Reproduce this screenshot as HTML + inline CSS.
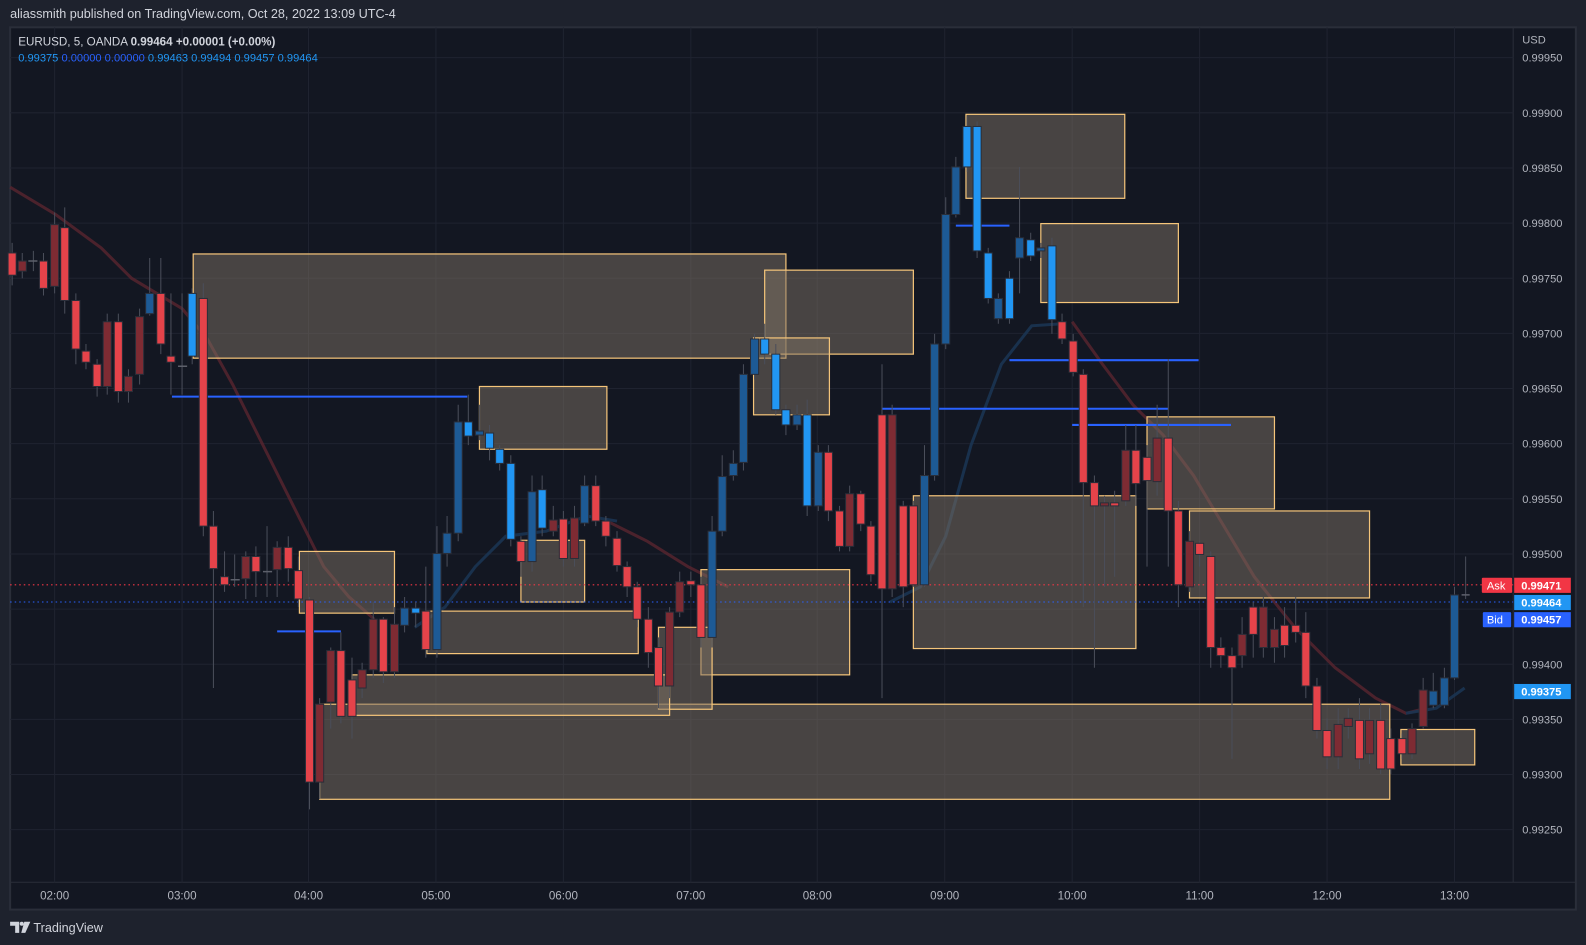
<!DOCTYPE html>
<html><head><meta charset="utf-8"><style>
html,body{margin:0;padding:0;background:#1e222d;overflow:hidden}
svg{display:block}
text{font-family:"Liberation Sans",sans-serif}
</style></head><body>
<svg width="1586" height="945" viewBox="0 0 1568 934" preserveAspectRatio="none" xmlns="http://www.w3.org/2000/svg">
<rect width="1568" height="934" fill="#1e222d"/>
<text x="10" y="18" fill="#d1d4dc" font-size="12.5">aliassmith published on TradingView.com, Oct 28, 2022 13:09 UTC-4</text>
<rect x="10" y="27" width="1548" height="872" fill="#131722" stroke="#2a2e39" stroke-width="2"/>
<line x1="10" y1="872" x2="1558" y2="872" stroke="#2a2e39"/>
<line x1="1496" y1="27" x2="1496" y2="872" stroke="#2a2e39"/>
<g stroke="#1f2330" stroke-width="1">
<path d="M54 27V872M180 27V872M305 27V872M431 27V872M557 27V872M683 27V872M808 27V872M934 27V872M1060 27V872M1186 27V872M1312 27V872M1438 27V872"/>
<path d="M10 57H1496M10 111.5H1496M10 166H1496M10 220.5H1496M10 275H1496M10 329.5H1496M10 384H1496M10 438.5H1496M10 493H1496M10 547.5H1496M10 602H1496M10 656.5H1496M10 711H1496M10 765.5H1496M10 820H1496"/>
</g>
<!-- moving averages -->
<path d="M10 185L55 212L100 245L130 275L180 305L205 335L230 380L260 440L290 500L320 560L345 590L370 612" fill="none" stroke="#5a2630" stroke-width="3" opacity=".8"/>
<path d="M600 515L640 535L680 560L720 580" fill="none" stroke="#5a2630" stroke-width="3" opacity=".8"/>
<path d="M1060 318L1090 360L1120 400L1150 430L1180 470L1210 520L1240 570L1280 620L1320 660L1360 690L1390 705L1410 700" fill="none" stroke="#5a2630" stroke-width="3" opacity=".8"/>
<path d="M410 620L440 600L470 560L500 530L540 525L580 510L610 515M880 595L910 580L935 530L960 440L990 360L1020 322L1050 320M1390 705L1420 700L1448 680" fill="none" stroke="#1b3452" stroke-width="3" opacity=".9"/>
<!-- boxes -->
<g fill="#7d7264" fill-opacity=".5" stroke="#f5c57a" stroke-width="1.2">
<rect x="316" y="696" width="1058" height="94"/>
<rect x="191" y="251" width="586" height="103"/>
<rect x="756" y="267" width="147" height="83"/>
<rect x="745" y="334" width="75" height="76"/>
<rect x="474" y="382" width="126" height="62"/>
<rect x="955" y="113" width="157" height="83"/>
<rect x="1029" y="221" width="136" height="78"/>
<rect x="1134" y="412" width="126" height="91"/>
<rect x="903" y="490" width="220" height="151"/>
<rect x="1176" y="505" width="178" height="86"/>
<rect x="296" y="545" width="94" height="61"/>
<rect x="515" y="534" width="63" height="61"/>
<rect x="693" y="563" width="147" height="104"/>
<rect x="422" y="604" width="209" height="42"/>
<rect x="651" y="620" width="53" height="81"/>
<rect x="348" y="667" width="314" height="40"/>
<rect x="1385" y="721" width="73" height="35"/>
</g>
<!-- blue levels -->
<g stroke="#2962ff" stroke-width="2">
<path d="M170 392H462M274 624H337M872 404H1155M998 356H1185M1060 420H1217M945 223H998"/>
</g>
<!-- ask/bid lines -->
<line x1="10" y1="578" x2="1496" y2="578" stroke="#f23645" stroke-dasharray="1.5 3" stroke-width="1"/>
<line x1="10" y1="595" x2="1496" y2="595" stroke="#2962ff" stroke-dasharray="1.5 3" stroke-width="1"/>
<!-- wicks -->
<path stroke="#4a4e5a" stroke-width="1" fill="none" d="M12 240V282M22 250V275M33 248V268M43 250V292M54 210V290M64 205V310M75 290V360M85 340V365M96 355V392M106 310V390M117 310V398M127 365V398M138 305V380M148 255V312M159 255V350M169 290V390M180 290V390M190 285V360M201 280V530M211 505V680M222 545V585M232 548V580M243 545V592M253 540V590M264 520V590M274 535V590M285 530V575M295 550V600M306 590V800M316 690V790M327 640V720M337 625V715M348 650V730M358 655V690M369 595V670M379 610V675M390 600V670M400 590V625M411 595V620M421 560V650M432 520V650M442 510V560M453 400V535M463 390V440M474 400V435M484 420V455M494 440V465M505 450V540M515 530V570M526 470V565M536 470V530M547 500V530M557 505V560M568 500V560M578 470V520M589 470V520M599 510V540M610 525V565M620 555V590M630 575V620M641 600V660M651 630V700M662 600V690M672 565V610M683 565V590M693 570V640M704 510V640M714 450V530M725 445V475M735 360V465M746 330V375M756 320V360M767 340V410M777 400V430M788 400V425M798 395V510M809 440V505M819 440V515M830 500V545M840 480V545M851 485V525M861 515V575M872 360V690M882 400V590M893 495V600M903 495V580M914 440V580M924 330V475M935 195V345M945 155V215M956 115V170M966 120V255M977 245V300M987 290V320M998 268V320M1008 165V290M1019 230V258M1029 240V255M1040 235V330M1050 310V340M1061 330V372M1071 365V600M1082 470V660M1092 490V580M1102 485V570M1113 420V500M1123 420V500M1134 440V560M1144 400V490M1155 355V560M1165 495V600M1176 525V585M1186 535V560M1197 545V660M1207 630V660M1218 640V750M1228 610V660M1239 595V650M1249 590V650M1260 610V655M1270 600V650M1281 590V635M1291 605V690M1302 670V730M1312 710V760M1323 700V760M1333 700V730M1344 690V760M1354 700V755M1365 695V765M1375 720V765M1386 725V750M1396 715V750M1407 670V720M1417 665V700M1428 660V700M1438 580V672M1449 550V592"/>
<!-- candles -->
<g stroke="#2a2e39" stroke-width="1">
<g fill="#e5434a">
<rect x="8" y="250" width="8" height="22"/><rect x="39" y="258" width="8" height="27"/><rect x="60" y="225" width="8" height="72"/><rect x="71" y="297" width="8" height="48"/><rect x="81" y="347" width="8" height="11"/><rect x="92" y="360" width="8" height="22"/><rect x="113" y="318" width="8" height="69"/><rect x="155" y="290" width="8" height="50"/><rect x="165" y="352" width="8" height="6"/><rect x="197" y="295" width="8" height="225"/><rect x="207" y="520" width="8" height="42"/><rect x="218" y="570" width="8" height="8"/><rect x="249" y="550" width="8" height="15"/><rect x="281" y="541" width="8" height="21"/><rect x="291" y="564" width="8" height="28"/><rect x="302" y="593" width="8" height="180"/><rect x="333" y="643" width="8" height="65"/><rect x="344" y="672" width="8" height="36"/><rect x="375" y="612" width="8" height="52"/><rect x="417" y="604" width="8" height="38"/><rect x="511" y="535" width="8" height="20"/><rect x="553" y="513" width="8" height="39"/><rect x="585" y="480" width="8" height="35"/><rect x="595" y="515" width="8" height="15"/><rect x="606" y="532" width="8" height="27"/><rect x="616" y="560" width="8" height="20"/><rect x="626" y="580" width="8" height="32"/><rect x="637" y="612" width="8" height="33"/><rect x="647" y="640" width="8" height="38"/><rect x="679" y="574" width="8" height="4"/><rect x="689" y="578" width="8" height="52"/><rect x="815" y="447" width="8" height="58"/><rect x="826" y="505" width="8" height="35"/><rect x="847" y="488" width="8" height="30"/><rect x="857" y="520" width="8" height="48"/><rect x="868" y="410" width="8" height="172"/><rect x="889" y="500" width="8" height="80"/><rect x="899" y="500" width="8" height="78"/><rect x="1046" y="318" width="8" height="17"/><rect x="1057" y="337" width="8" height="31"/><rect x="1067" y="370" width="8" height="107"/><rect x="1078" y="477" width="8" height="23"/><rect x="1098" y="497" width="8" height="3"/><rect x="1119" y="445" width="8" height="33"/><rect x="1130" y="452" width="8" height="23"/><rect x="1151" y="433" width="8" height="72"/><rect x="1161" y="505" width="8" height="73"/><rect x="1182" y="537" width="8" height="11"/><rect x="1193" y="550" width="8" height="90"/><rect x="1203" y="640" width="8" height="8"/><rect x="1214" y="648" width="8" height="12"/><rect x="1235" y="600" width="8" height="27"/><rect x="1266" y="618" width="8" height="20"/><rect x="1277" y="618" width="8" height="7"/><rect x="1287" y="625" width="8" height="53"/><rect x="1298" y="678" width="8" height="44"/><rect x="1308" y="722" width="8" height="26"/><rect x="1340" y="712" width="8" height="38"/><rect x="1361" y="712" width="8" height="48"/><rect x="1371" y="730" width="8" height="30"/><rect x="1382" y="730" width="8" height="15"/>
</g>
<g fill="#7e2b33">
<rect x="18" y="258" width="8" height="10"/><rect x="50" y="222" width="8" height="61"/><rect x="102" y="318" width="8" height="64"/><rect x="123" y="372" width="8" height="15"/><rect x="134" y="313" width="8" height="57"/><rect x="239" y="550" width="8" height="22"/><rect x="270" y="541" width="8" height="22"/><rect x="312" y="696" width="8" height="77"/><rect x="323" y="643" width="8" height="51"/><rect x="354" y="662" width="8" height="18"/><rect x="365" y="612" width="8" height="50"/><rect x="386" y="617" width="8" height="47"/><rect x="543" y="514" width="8" height="11"/><rect x="564" y="512" width="8" height="40"/><rect x="658" y="605" width="8" height="73"/><rect x="668" y="575" width="8" height="30"/><rect x="836" y="488" width="8" height="52"/><rect x="878" y="410" width="8" height="172"/><rect x="1088" y="497" width="8" height="3"/><rect x="1109" y="445" width="8" height="50"/><rect x="1140" y="433" width="8" height="43"/><rect x="1172" y="535" width="8" height="45"/><rect x="1224" y="627" width="8" height="21"/><rect x="1245" y="600" width="8" height="40"/><rect x="1256" y="622" width="8" height="18"/><rect x="1319" y="716" width="8" height="32"/><rect x="1329" y="710" width="8" height="8"/><rect x="1350" y="712" width="8" height="33"/><rect x="1392" y="720" width="8" height="25"/><rect x="1403" y="682" width="8" height="36"/>
</g>
<g fill="#2196f3">
<rect x="186" y="290" width="8" height="62"/><rect x="407" y="601" width="8" height="5"/><rect x="459" y="417" width="8" height="14"/><rect x="480" y="428" width="8" height="15"/><rect x="490" y="444" width="8" height="14"/><rect x="501" y="458" width="8" height="75"/><rect x="532" y="484" width="8" height="38"/><rect x="752" y="335" width="8" height="15"/><rect x="763" y="350" width="8" height="55"/><rect x="773" y="405" width="8" height="15"/><rect x="794" y="410" width="8" height="90"/><rect x="952" y="125" width="8" height="40"/><rect x="962" y="125" width="8" height="123"/><rect x="973" y="250" width="8" height="45"/><rect x="994" y="275" width="8" height="40"/><rect x="1015" y="237" width="8" height="16"/><rect x="1036" y="243" width="8" height="73"/>
</g>
<g fill="#1d5a95">
<rect x="144" y="290" width="8" height="20"/><rect x="396" y="601" width="8" height="17"/><rect x="428" y="547" width="8" height="95"/><rect x="438" y="527" width="8" height="20"/><rect x="449" y="417" width="8" height="110"/><rect x="470" y="426" width="8" height="4"/><rect x="522" y="486" width="8" height="69"/><rect x="574" y="480" width="8" height="37"/><rect x="700" y="525" width="8" height="105"/><rect x="710" y="471" width="8" height="54"/><rect x="721" y="458" width="8" height="12"/><rect x="731" y="370" width="8" height="87"/><rect x="742" y="335" width="8" height="35"/><rect x="784" y="410" width="8" height="10"/><rect x="805" y="447" width="8" height="53"/><rect x="910" y="470" width="8" height="108"/><rect x="920" y="340" width="8" height="130"/><rect x="931" y="212" width="8" height="128"/><rect x="941" y="165" width="8" height="47"/><rect x="983" y="295" width="8" height="20"/><rect x="1004" y="235" width="8" height="20"/><rect x="1025" y="245" width="8" height="3"/><rect x="1413" y="683" width="8" height="14"/><rect x="1424" y="670" width="8" height="27"/><rect x="1434" y="588" width="8" height="82"/>
</g>
</g>
<path d="M28 258H37M176 362H185M228 573H237M260 565H269M1445 588H1453" stroke="#5d606b" stroke-width="1.5"/>
<!-- header -->
<text x="18" y="45" fill="#d1d4dc" font-size="11.5">EURUSD, 5, OANDA  <tspan font-weight="bold">0.99464</tspan>  <tspan font-weight="bold">+0.00001 (+0.00%)</tspan></text>
<text x="18" y="61" fill="#2196f3" font-size="11">0.99375  <tspan fill="#2962ff">0.00000  0.00000</tspan>  0.99463  0.99494  0.99457  0.99464</text>
<!-- price axis -->
<g fill="#b2b5be" font-size="11">
<text x="1505" y="43">USD</text>
<text x="1505" y="61">0.99950</text><text x="1505" y="115.5">0.99900</text><text x="1505" y="170">0.99850</text><text x="1505" y="224.5">0.99800</text><text x="1505" y="279">0.99750</text><text x="1505" y="333.5">0.99700</text><text x="1505" y="388">0.99650</text><text x="1505" y="442.5">0.99600</text><text x="1505" y="497">0.99550</text><text x="1505" y="551.5">0.99500</text><text x="1505" y="660.5">0.99400</text><text x="1505" y="715">0.99350</text><text x="1505" y="769.5">0.99300</text><text x="1505" y="824">0.99250</text>
</g>
<rect x="1465" y="571" width="30" height="15" rx="1" fill="#f23645"/>
<text x="1470" y="582.5" fill="#fff" font-size="11">Ask</text>
<rect x="1497" y="571" width="56" height="15" fill="#f23645"/>
<text x="1504" y="582.5" fill="#fff" font-size="11" font-weight="bold">0.99471</text>
<rect x="1497" y="588" width="56" height="15" fill="#2196f3"/>
<text x="1504" y="599.5" fill="#fff" font-size="11" font-weight="bold">0.99464</text>
<rect x="1466" y="605" width="28" height="15" rx="1" fill="#2962ff"/>
<text x="1470" y="616.5" fill="#fff" font-size="11">Bid</text>
<rect x="1497" y="605" width="56" height="15" fill="#2962ff"/>
<text x="1504" y="616.5" fill="#fff" font-size="11" font-weight="bold">0.99457</text>
<rect x="1497" y="676" width="56" height="15" fill="#2196f3"/>
<text x="1504" y="687.5" fill="#fff" font-size="11" font-weight="bold">0.99375</text>
<!-- time axis -->
<g fill="#b2b5be" font-size="11.5" text-anchor="middle">
<text x="54" y="889">02:00</text><text x="180" y="889">03:00</text><text x="305" y="889">04:00</text><text x="431" y="889">05:00</text><text x="557" y="889">06:00</text><text x="683" y="889">07:00</text><text x="808" y="889">08:00</text><text x="934" y="889">09:00</text><text x="1060" y="889">10:00</text><text x="1186" y="889">11:00</text><text x="1312" y="889">12:00</text><text x="1438" y="889">13:00</text>
</g>
<!-- footer logo -->
<g fill="#d1d4dc">
<path d="M10 911H19V922H15V915H10Z"/><circle cx="21.5" cy="913" r="2"/><path d="M24 911H30L25 922H21Z"/>
</g>
<text x="33" y="921" fill="#d1d4dc" font-size="12.5">TradingView</text>
</svg>
</body></html>
